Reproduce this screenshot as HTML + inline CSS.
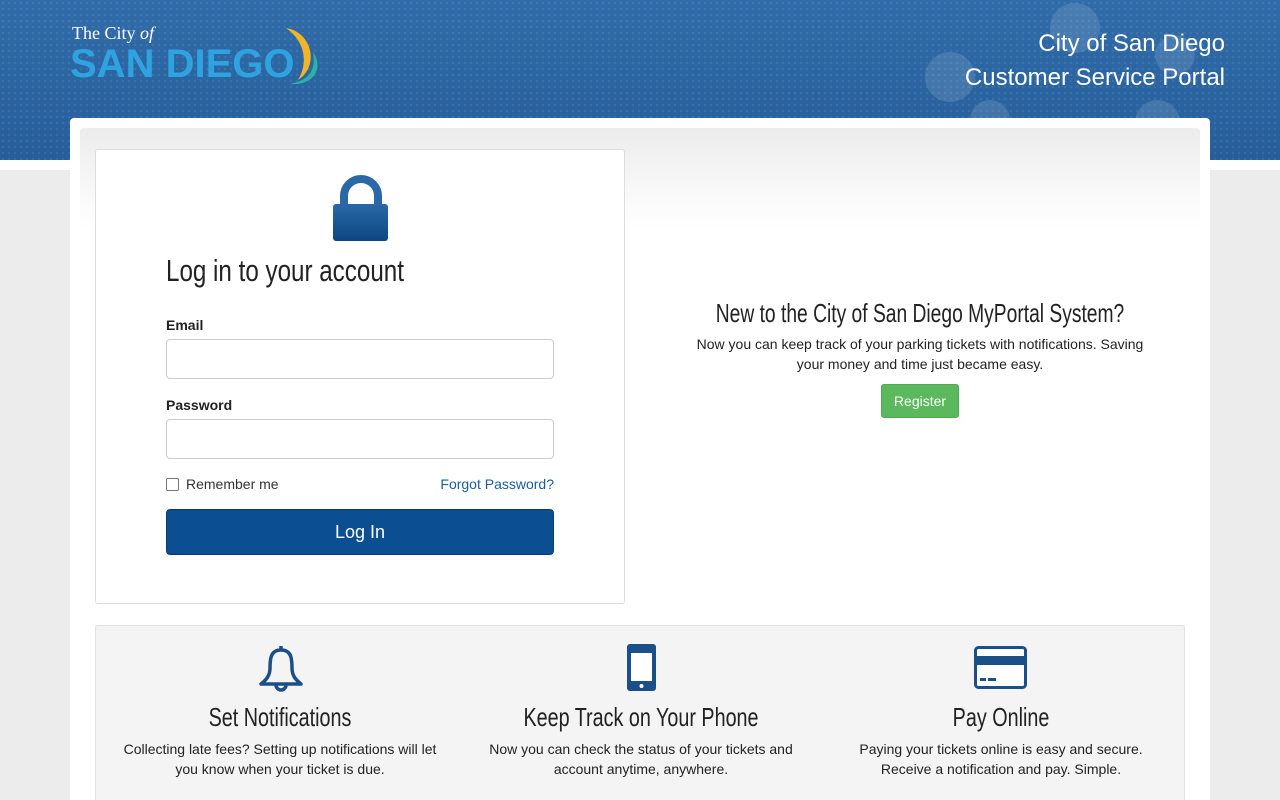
<!DOCTYPE html>
<html><head><meta charset="utf-8"><style>
*{box-sizing:border-box;margin:0;padding:0}
html,body{width:1280px;height:800px;overflow:hidden}
body{background:#ececec;font-family:"Liberation Sans",Arial,sans-serif;position:relative}
.hdr{position:absolute;left:0;top:0;width:1280px;height:160px;background-image:radial-gradient(rgba(255,255,255,.08) 1px,transparent 1.5px),linear-gradient(180deg,#306ca9,#265e9a);background-size:6px 6px,auto}
.strip{position:absolute;top:160px;left:0;width:1280px;height:10px;background:#fff}
.title{position:absolute;right:55px;top:27px;color:#fff;font-size:24px;text-align:right;line-height:34px}
.circ{position:absolute;border-radius:50%;background:rgba(255,255,255,.12)}
.wrap{position:absolute;left:70px;top:118px;width:1140px;height:682px;background:#fff;border-radius:4px 4px 0 0}
.inner{position:absolute;left:80px;top:128px;width:1120px;height:100px;background:linear-gradient(#ececec,#fff);border-radius:4px 4px 0 0}
.login{position:absolute;left:95px;top:149px;width:530px;height:455px;background:#fff;border:1px solid #ddd;border-radius:3px}
.cond{font-family:"Liberation Sans",sans-serif;color:#222;white-space:nowrap}
h1{position:absolute;left:70px;top:103px;font-size:31px;font-weight:normal;transform:scaleX(.78);transform-origin:left}
label{position:absolute;left:70px;font-size:14px;font-weight:bold;color:#222}
.inp{position:absolute;left:70px;width:388px;height:40px;border:1px solid #ccc;border-radius:4px}
.btn{position:absolute;left:70px;top:359px;width:388px;height:46px;background:#0b4f92;border:1px solid #083d72;border-radius:4px;color:#fff;font-size:18px;text-align:center;line-height:44px}
.rt{position:absolute;left:660px;width:520px;text-align:center}
.feat{position:absolute;left:95px;top:625px;width:1090px;height:175px;background:#f4f4f4;border:1px solid #e2e2e2;border-bottom:none;border-radius:3px 3px 0 0;overflow:hidden}
.f{position:absolute;top:0;width:360px;text-align:center}
.f h2{position:absolute;top:76px;width:100%;font-size:26px;font-weight:normal;transform:scaleX(.76)}
.f p{position:absolute;top:113px;left:20px;right:20px;font-size:14px;line-height:20px;color:#222}
</style></head><body>
<div class="hdr">
<div class="circ" style="left:925px;top:52px;width:50px;height:50px"></div>
<div class="circ" style="left:1050px;top:3px;width:50px;height:50px"></div>
<div class="circ" style="left:1155px;top:35px;width:40px;height:40px"></div>
<div class="circ" style="left:970px;top:100px;width:40px;height:40px"></div>
<div class="circ" style="left:1135px;top:100px;width:45px;height:45px"></div>
<div style="position:absolute;left:72px;top:23px;color:#fff;font-family:'Liberation Serif',serif;font-size:18px">The City <i>of</i></div>
<div style="position:absolute;left:70px;top:42px;color:#2fa3e0;font-size:40px;font-weight:bold;letter-spacing:0px">SAN DIEGO</div>
<svg style="position:absolute;left:282px;top:26px" width="40" height="60" viewBox="0 0 40 60"><path d="M4 2 C30 6 38 40 16 54 C26 38 24 16 4 2Z" fill="#f4b428"/><path d="M31 26 C42 42 32 60 8 58 C28 54 34 44 31 26Z" fill="#2bb2a6"/></svg>
<div class="title">City of San Diego<br>Customer Service Portal</div>
</div>
<div class="strip"></div>
<div class="wrap"></div>
<div class="inner"></div>
<div class="login">
<svg style="position:absolute;left:237px;top:24px" width="56" height="68" viewBox="0 0 56 68"><defs><linearGradient id="g" x1="0" y1="0" x2="0" y2="1"><stop offset="0" stop-color="#2a68a8"/><stop offset="1" stop-color="#0d4683"/></linearGradient></defs><path d="M11 32 V22 A17 17 0 0 1 45 22 V32" fill="none" stroke="#2a68a8" stroke-width="8"/><rect x="0" y="30" width="55" height="37" rx="3" fill="url(#g)"/></svg>
<h1 class="cond">Log in to your account</h1>
<label style="top:167px">Email</label>
<div class="inp" style="top:189px"></div>
<label style="top:247px">Password</label>
<div class="inp" style="top:269px"></div>
<div style="position:absolute;left:70px;top:328px;width:13px;height:13px;border:1px solid #777;border-radius:2px"></div>
<div style="position:absolute;left:90px;top:326px;font-size:14px;color:#333">Remember me</div>
<div style="position:absolute;right:70px;top:326px;font-size:14px;color:#1a5c9c">Forgot Password?</div>
<div class="btn">Log In</div>
</div>
<div class="cond" style="position:absolute;left:570px;width:700px;text-align:center;top:298px;font-size:26px;transform:scaleX(.74)">New to the City of San Diego MyPortal System?</div>
<div class="rt" style="top:334px;font-size:14px;line-height:20px;color:#222;padding:0 35px">Now you can keep track of your parking tickets with notifications. Saving your money and time just became easy.</div>
<div style="position:absolute;left:881px;top:384px;width:78px;height:34px;background:#5cb85c;border:1px solid #4cae4c;border-radius:3px;color:#fff;font-size:14px;text-align:center;line-height:32px">Register</div>
<div class="feat">
<div class="f" style="left:4px">
<svg style="position:absolute;left:158px;top:18px" width="46" height="48" viewBox="0 0 46 48"><path d="M23 2 V6 M23 6 C13 6 12 14 12 24 C12 32 8 36 3 40 H43 C38 36 34 32 34 24 C34 14 33 6 23 6Z M18 41 A5 5 0 0 0 28 41" fill="none" stroke="#1b4f88" stroke-width="3.5" stroke-linejoin="round"/></svg>
<h2 class="cond">Set Notifications</h2>
<p>Collecting late fees? Setting up notifications will let you know when your ticket is due.</p></div>
<div class="f" style="left:365px">
<svg style="position:absolute;left:166px;top:18px" width="30" height="48" viewBox="0 0 30 48"><rect x="0" y="0" width="29" height="47" rx="3" fill="#1b4f88"/><rect x="4" y="9" width="21" height="28" fill="#fff"/><circle cx="14.5" cy="42" r="2" fill="#fff"/></svg>
<h2 class="cond">Keep Track on Your Phone</h2>
<p style="left:25px;right:25px">Now you can check the status of your tickets and account anytime, anywhere.</p></div>
<div class="f" style="left:725px">
<svg style="position:absolute;left:153px;top:20px" width="54" height="44" viewBox="0 0 54 44"><rect x="1.5" y="1.5" width="50" height="40" rx="3" fill="#fff" stroke="#1b4f88" stroke-width="3"/><rect x="1.5" y="10" width="50" height="9" fill="#1b4f88"/><rect x="6" y="32" width="6" height="3" fill="#1b4f88"/><rect x="14" y="32" width="8" height="3" fill="#1b4f88"/></svg>
<h2 class="cond">Pay Online</h2>
<p>Paying your tickets online is easy and secure.<br>Receive a notification and pay. Simple.</p></div>
</div>
</body></html>
